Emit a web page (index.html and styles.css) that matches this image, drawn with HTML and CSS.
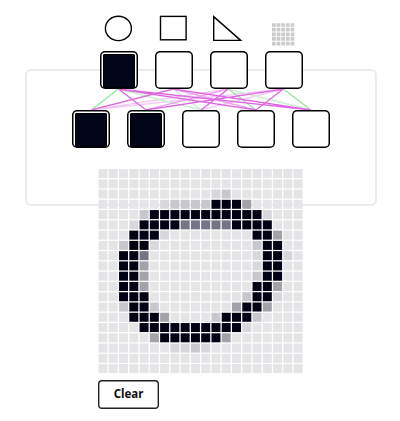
FILE: index.html
```html
<!DOCTYPE html>
<html lang="en">
<head>
<meta charset="utf-8">
<title>Shape network</title>
<link rel="stylesheet" href="styles.css">
</head>
<body>
<main class="page">
  <div class="panel"></div>
  <div class="content">
    <svg class="shapes" width="220" height="51" viewBox="91 0 220 51" fill="none" stroke="#000" stroke-width="1.4">
      <ellipse cx="118.4" cy="28.4" rx="13" ry="12.2"/>
      <rect x="160.5" y="16.4" width="25.6" height="23.4"/>
      <path d="M213.7 16.6V40.4H240.7Z"/>
      <path d="M272 25h23M272 29.65h23M272 34.3h23M272 38.95h23M272 43.6h23" stroke="#cbcbcd" stroke-width="3.7" stroke-dasharray="3.7 .95"/>
    </svg>
    <div class="nodes">
      <div class="node on"></div><div class="node"></div><div class="node"></div><div class="node"></div>
    </div>
    <svg class="links" width="276" height="21" viewBox="63 89 276 21" fill="none" stroke-width="1.3">
      <g stroke="#f3c9f4"><path d="M228.3 89 91.3 110M283.3 89 91.3 110M283.3 89 201 110"/></g>
      <g stroke="#c9efcd"><path d="M118.4 89 201 110M173.3 89 201 110M228.3 89 311 110"/></g>
      <g stroke="#eaa5ed"><path d="M228.3 89 146.2 110M173.3 89 256 110"/></g>
      <g stroke="#99e3a3"><path d="M118.4 89 91.3 110M228.3 89 256 110M283.3 89 311 110"/></g>
      <g stroke="#df68e2"><path d="M118.4 89 146.2 110M118.4 89 256 110M118.4 89 311 110M173.3 89 91.3 110M173.3 89 311 110M228.3 89 201 110M283.3 89 146.2 110M283.3 89 256 110"/></g>
    </svg>
    <div class="nodes">
      <div class="node on"></div><div class="node on"></div><div class="node"></div><div class="node"></div><div class="node"></div>
    </div>
    <div class="drawing">
      <svg class="pixels" id="pixels" width="206" height="206" viewBox="0 0 206 206"></svg>
      <button class="clear">Clear</button>
    </div>
  </div>
</main>
<script src="script.js"></script>
</body>
</html>
```
FILE: styles.css
```css
* { box-sizing: border-box; }
body { margin: 0; background: #fff; overflow: hidden; }
.page { display: grid; grid-template-columns: 400px; width: 400px; height: 421px; }
.panel {
  grid-area: 1 / 1;
  margin: 69px 23px 0 25px;
  height: 137px;
  border: 2px solid #ebebed;
  border-radius: 6px;
}
.content {
  grid-area: 1 / 1;
  display: flex;
  flex-direction: column;
  align-items: center;
  width: 402px;
  z-index: 1;
}
.shapes, .links { display: block; flex: none; }
.nodes { display: flex; gap: 17px; }
.node {
  width: 38px;
  height: 38px;
  padding: 3px;
  background: #fff;
  box-shadow: inset 0 0 0 1.5px #000;
  border-radius: 5px;
}
.on::before {
  content: "";
  display: block;
  height: 100%;
  background: #020417;
  border: 1px solid #000;
  border-radius: 1px;
}
.drawing { margin-top: 21px; width: 206px; }
.pixels { display: block; fill: #e5e5e7; }
.v { fill: #d8d8dc; }
.l { fill: #c7c7cd; }
.m { fill: #a2a2aa; }
.d { fill: #747487; }
.k { fill: #010213; }
.clear {
  display: block;
  width: 61px;
  height: 29px;
  margin: 5px 0 0;
  padding: 0 0 2px;
  background: #fff;
  border: 0;
  box-shadow: inset 0 0 0 1.4px #222;
  border-radius: 4px;
  color: #111;
  font: 700 11.5px "Noto Sans", "Open Sans", sans-serif;
}
```
FILE: script.js
```javascript
// Ink density per cell: k full, d dark, m medium, l light, v faint.
const rows = [
  "....................",
  "....................",
  "...........vl.......",
  "......vllllkkkm.....",
  "....lkkkkkkkkkkkv...",
  "...vkkkkdddddkkkk...",
  "...kkkv........kkm..",
  "..lkkv.........lkk..",
  "..kkd..........vkkv.",
  "..kkm..........vkk..",
  "..kkm..........lkk..",
  "..kkm..........kkm..",
  "..kkk.........lkkv..",
  "..lkkl.......mkkm...",
  "...kkkm....lkkkl....",
  "....kkkkkkkkkkv.....",
  ".....mkkkkkkm.......",
  ".......vvlv.........",
  "....................",
  "...................."
];
const pitch = 10.27;
const box = document.getElementById("pixels");
rows.forEach((row, y) => {
  [...row].forEach((c, x) => {
    const cell = document.createElementNS("http://www.w3.org/2000/svg", "rect");
    cell.setAttribute("x", (x * pitch + 0.5).toFixed(2));
    cell.setAttribute("y", (y * pitch).toFixed(2));
    cell.setAttribute("width", 9);
    cell.setAttribute("height", 9);
    if (c !== ".") cell.setAttribute("class", c);
    box.append(cell);
  });
});
```
